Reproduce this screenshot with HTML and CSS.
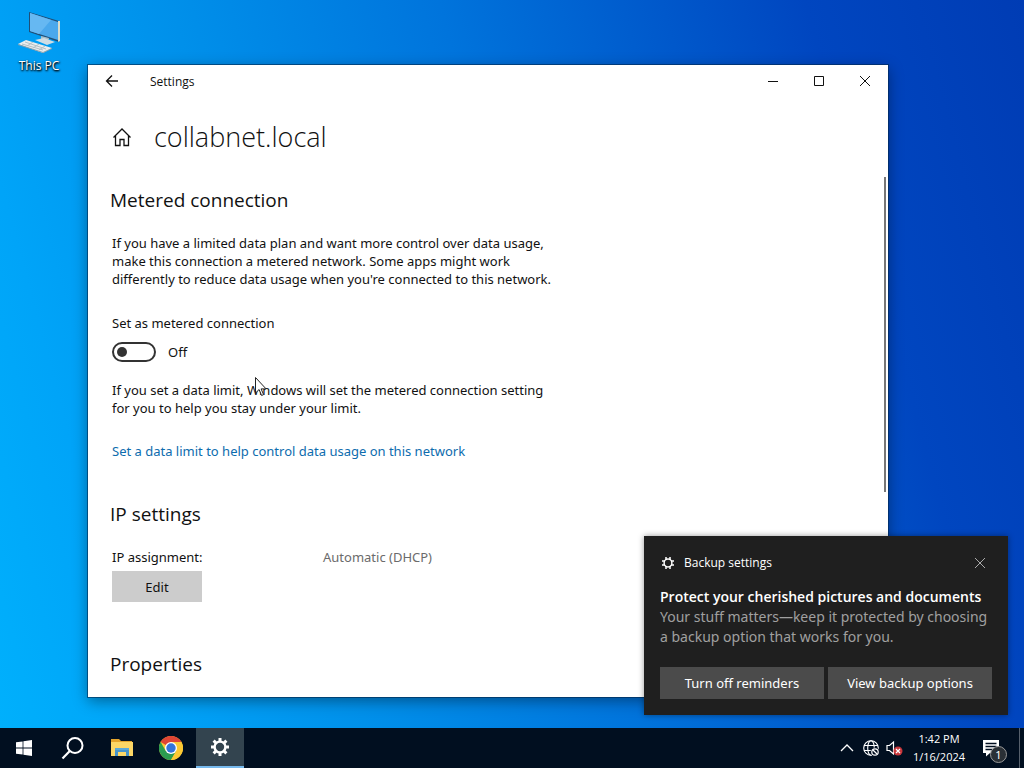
FILE: index.html
```html
<!DOCTYPE html>
<html lang="en">
<head>
    <meta charset="UTF-8">
    <meta name="viewport" content="width=device-width, initial-scale=1.0">
    <title>Settings</title>
    <link rel="stylesheet" href="styles.css">
</head>
<body>
    <div class="desktop">
        <a class="shortcut" href="#">
            <svg width="44" height="44" viewBox="0 0 44 44">
                <polygon points="12,1 42,10 42,31 12,21" fill="#1f4f78"/>
                <polygon points="41,10 43,10 43,30 41,31" fill="#d8dccb"/>
                <polygon points="13,2 41,11 41,29 13,20" fill="#4aa8ec"/>
                <polygon points="13,2 34,9 22,23 13,20" fill="#66b8f2"/>
                <polygon points="24,25 32,27 31,31 24,29" fill="#a9bfca"/>
                <polygon points="18,29 27,27 38,31 30,34" fill="#cfdde4"/>
                <polygon points="1,33 9,29 35,37 26,42" fill="#e9edee"/>
                <polygon points="1,33 26,41 35,37 35,38 26,42 1,34" fill="#8ba0ad"/>
                <path d="M5 33l21 6M8 31l21 7M10 35l6-4M16 37l6-4M22 39l6-4" stroke="#b5c0c5" fill="none"/>
            </svg>
            <span>This PC</span>
        </a>

        <div class="window">
            <div class="titlebar">
                <button class="back" aria-label="Back">
                    <svg width="14" height="14" viewBox="0 0 14 14"><path d="M13 7H1.500M7 1.500L1.500 7L7 12.500"/></svg>
                </button>
                <span class="caption">Settings</span>
                <button class="control" aria-label="Minimize">
                    <svg width="10" height="10" viewBox="0 0 10 10"><path d="M0 5.500h10"/></svg>
                </button>
                <button class="control" aria-label="Maximize">
                    <svg width="10" height="10" viewBox="0 0 10 10"><path d="M.5 .5h9v9h-9z"/></svg>
                </button>
                <button class="control" aria-label="Close">
                    <svg width="10" height="10" viewBox="0 0 10 10"><path d="M0 0l10 10M10 0L0 10"/></svg>
                </button>
            </div>
            <div class="header">
                <a class="home" href="#" aria-label="Home">
                    <svg width="20" height="20" viewBox="0 0 20 20"><path d="M1.500 10.500L10 2l8.500 8.500M3.500 9v9.500h4.500v-6h4v6h4.500V9"/></svg>
                </a>
                <h1>collabnet.local</h1>
            </div>
            <div class="content">
                <h2>Metered connection</h2>
                <p class="text">If you have a limited data plan and want more control over data usage, make this connection a metered network. Some apps might work differently to reduce data usage when you're connected to this network.</p>
                <label class="label" for="metered">Set as metered connection</label>
                <div class="toggle">
                    <input type="checkbox" id="metered" class="switch">
                    <span>Off</span>
                </div>
                <p class="text">If you set a data limit, Windows will set the metered connection setting for you to help you stay under your limit.</p>
                <a class="link" href="#">Set a data limit to help control data usage on this network</a>

                <h2>IP settings</h2>
                <dl class="row">
                    <dt>IP assignment:</dt>
                    <dd>Automatic (DHCP)</dd>
                </dl>
                <button class="edit">Edit</button>

                <h2>Properties</h2>
                <div class="scrollbar"></div>
            </div>
        </div>

        <div class="toast">
            <div class="toast-head">
                <svg width="16" height="16" viewBox="0 0 16 16">
                    <circle cx="8" cy="8" r="3.900" fill="none" stroke="#fff" stroke-width="1.500"/>
                    <path d="M6 2v3M10 2v3M6 11v3M10 11v3M2 6h3M2 10h3M11 6h3M11 10h3" stroke="#fff" stroke-width="1.500"/>
                </svg>
                <span>Backup settings</span>
                <button class="dismiss" aria-label="Dismiss">
                    <svg width="10" height="10" viewBox="0 0 10 10"><path d="M0 0l10 10M10 0L0 10"/></svg>
                </button>
            </div>
            <h3>Protect your cherished pictures and documents</h3>
            <p>Your stuff matters—keep it protected by choosing a backup option that works for you.</p>
            <div class="toast-buttons">
                <button>Turn off reminders</button>
                <button>View backup options</button>
            </div>
        </div>

        <svg class="cursor" width="13" height="20" viewBox="0 0 13 20">
            <path d="M.5 .5v15.500l3.600-3.500 2.500 6 2-.9-2.500-5.700h5z" fill="#fff" stroke="#222"/>
        </svg>
    </div>

    <div class="taskbar">
        <button class="task" aria-label="Start">
            <svg width="16" height="16" viewBox="0 0 16 16"><path d="M0 2.300L6.600 1.400v6.200H0zM7.400 1.300L16 0v7.600H7.400zM0 8.400h6.600v6.200L0 13.700zM7.400 8.400H16V16l-8.600-1.300z" fill="#fff"/></svg>
        </button>
        <button class="task" aria-label="Search">
            <svg width="24" height="24" viewBox="0 0 24 24"><circle cx="14" cy="9.500" r="7.500" fill="none" stroke="#fff" stroke-width="2"/><path d="M8.800 15L1.500 22.500" stroke="#fff" stroke-width="2.200"/></svg>
        </button>
        <button class="task" aria-label="File Explorer">
            <svg width="22" height="18" viewBox="0 0 22 18">
                <path d="M0 0h8l2 2h11v4H0z" fill="#e5a52c"/>
                <path d="M0 3h22v14H0z" fill="#fcd766"/>
                <path d="M4 9h14v8h-3v-4H7v4H4z" fill="#4794c9"/>
                <path d="M4 9h14v2H4z" fill="#5ba9d8"/>
            </svg>
        </button>
        <button class="task" aria-label="Chrome">
            <svg width="24" height="24" viewBox="0 0 24 24">
                <circle cx="12" cy="12" r="12" fill="#fcc934"/>
                <path d="M12 12L1.600 6A12 12 0 0 1 22.400 6z" fill="#df4535"/>
                <path d="M1.600 6A12 12 0 0 0 12 24L17.200 15L12 12L6.800 15z" fill="#2c9d50"/>
                <path d="M12 6h10.400A12 12 0 0 1 12 24l5.200-9z" fill="#fcc934"/>
                <circle cx="12" cy="12" r="6" fill="#fff"/>
                <circle cx="12" cy="12" r="4.700" fill="#3475dc"/>
            </svg>
        </button>
        <button class="task active" aria-label="Settings">
            <svg width="20" height="20" viewBox="0 0 20 20">
                <circle cx="10" cy="10" r="5.400" fill="none" stroke="#fff" stroke-width="2.400"/>
                <path d="M10 1v3.500M10 15.500V19M1 10h3.500M15.500 10H19M3.600 3.600L6 6M14 14l2.400 2.400M3.600 16.400L6 14M14 6l2.400-2.400" stroke="#fff" stroke-width="3"/>
            </svg>
        </button>
        <div class="tray">
            <button aria-label="Show hidden icons">
                <svg width="24" height="18" viewBox="0 0 24 18"><path d="M6 12l6-6 6 6" fill="none" stroke="#fff" stroke-width="1.300"/></svg>
            </button>
            <button aria-label="Network">
                <svg width="24" height="18" viewBox="0 0 24 18">
                    <g fill="none" stroke="#fff" stroke-width="1.100">
                        <circle cx="12" cy="9" r="7.300"/>
                        <ellipse cx="12" cy="9" rx="3.300" ry="7.300"/>
                        <path d="M5 6.500h14M5 11.500h14"/>
                    </g>
                    <circle cx="16" cy="13" r="4.500" fill="#010d1f"/>
                    <circle cx="16" cy="13" r="3.200" fill="none" stroke="#fff" stroke-width="1.200"/>
                    <path d="M14 11l4 4" stroke="#fff" stroke-width="1.200"/>
                </svg>
            </button>
            <button aria-label="Volume muted">
                <svg width="24" height="18" viewBox="0 0 24 18">
                    <path d="M4 6.500h2.500L10.500 3v12l-4-3.500H4z" fill="none" stroke="#fff" stroke-width="1.200"/>
                    <circle cx="15" cy="12" r="4.500" fill="#c9373c"/>
                    <path d="M13 10l4 4M17 10l-4 4" stroke="#fff" stroke-width="1.200"/>
                </svg>
            </button>
            <button class="clock"><span>1:42 PM</span><span>1/16/2024</span></button>
            <button class="notifications" aria-label="Notifications">
                <svg width="18" height="18" viewBox="0 0 18 18">
                    <path d="M1 1h16v13h-9l-4 3.500V14H1z" fill="#fff"/>
                    <path d="M3.500 4.500h11M3.500 7.500h11M3.500 10.500h7" stroke="#020f20" stroke-width="1.300"/>
                </svg>
                <span class="badge">1</span>
            </button>
        </div>
    </div>
</body>
</html>
```
FILE: styles.css
```css
* {
    box-sizing: border-box;
}
body {
    margin: 0;
    height: 100vh;
    display: flex;
    flex-direction: column;
    overflow: hidden;
    font-family: "Noto Sans", "Open Sans", sans-serif;
    font-size: 13px;
    line-height: 18px;
    color: #111;
}
h1, h2, h3, p, dl, dd {
    margin: 0;
}
button {
    font: inherit;
    color: inherit;
    border: none;
    padding: 0;
    background: none;
}
a {
    text-decoration: none;
}
svg {
    display: block;
}
.desktop {
    position: relative;
    flex: 1;
    background: linear-gradient(75deg, #00b0fc 0%, #00a4f8 12%, #0090ea 30%, #0074dc 52%, #0046c0 82%, #003cb4 100%);
}
.shortcut {
    display: flex;
    flex-direction: column;
    align-items: center;
    width: 78px;
    padding-top: 11px;
    color: #fff;
    font-family: "Open Sans", sans-serif;
    font-size: 12px;
    line-height: 22px;
    text-shadow: 0 1px 2px #000, 1px 1px 2px #000;
}

/* settings window */
.window {
    position: absolute;
    top: 65px;
    right: 136px;
    bottom: 31px;
    left: 88px;
    display: flex;
    flex-direction: column;
    background: #fff;
    box-shadow: 0 0 0 1px rgba(0, 40, 80, 0.6), 0 4px 14px rgba(0, 0, 0, 0.4);
}
.titlebar {
    display: flex;
    height: 32px;
    font-family: "Open Sans", sans-serif;
    font-size: 12px;
}
.titlebar svg, .home svg {
    fill: none;
    stroke: #111;
    stroke-width: 1;
}
.home svg, .back svg {
    stroke-width: 1.3;
}
.back {
    width: 48px;
    display: flex;
    justify-content: center;
    align-items: center;
}
.caption {
    flex: 1;
    padding-left: 14px;
    line-height: 34px;
}
.control {
    width: 46px;
    display: flex;
    justify-content: center;
    align-items: center;
}
.header {
    display: flex;
    align-items: center;
    gap: 22px;
    height: 80px;
    padding-left: 24px;
}
h1 {
    font-family: "Open Sans", sans-serif;
    font-size: 27px;
    font-weight: 300;
    line-height: 36px;
}
.content {
    position: relative;
    flex: 1;
    overflow: hidden;
    padding: 9px 24px 0;
}
h2 {
    margin: 0 0 20px -2px;
    font-family: "Open Sans", sans-serif;
    font-size: 19px;
    font-weight: 400;
    line-height: 28px;
}
.text {
    max-width: 450px;
}
.label {
    display: block;
    margin-top: 26px;
}
.toggle {
    display: flex;
    align-items: center;
    gap: 12px;
    margin: 10px 0 19px;
    height: 20px;
}
.switch {
    appearance: none;
    margin: 0;
    width: 44px;
    height: 20px;
    padding: 3px;
    border: 2px solid #333;
    border-radius: 10px;
}
.switch::before {
    content: '';
    display: block;
    width: 10px;
    height: 10px;
    border-radius: 50%;
    background: #333;
}
.link {
    display: block;
    margin: 25px 0 40px;
    color: #0d6cae;
}
.row {
    display: flex;
}
.row dt {
    width: 211px;
}
.row dd {
    color: #6b6b6b;
}
.edit {
    display: block;
    width: 90px;
    height: 31px;
    margin: 5px 0 48px;
    background: #ccc;
}
.scrollbar {
    position: absolute;
    top: 0;
    right: 2px;
    width: 2px;
    height: 315px;
    background: #777;
}

/* notification */
.toast {
    position: absolute;
    right: 16px;
    bottom: 13px;
    width: 364px;
    padding: 17px 16px 16px;
    background: #1f1f1f;
    color: #fff;
    font-size: 14px;
    line-height: 20px;
    box-shadow: 0 0 6px rgba(0, 0, 0, 0.4);
}
.toast-head {
    display: flex;
    align-items: center;
    gap: 8px;
    margin-bottom: 14px;
    font-family: "Open Sans", sans-serif;
    font-size: 12px;
}
.dismiss {
    margin-left: auto;
    padding: 5px 7px;
}
.dismiss svg {
    stroke: #aaa;
}
.toast h3 {
    font-family: "Open Sans", sans-serif;
    font-size: 14px;
    font-weight: 600;
}
.toast p {
    color: #a0a0a0;
}
.toast-buttons {
    display: flex;
    gap: 4px;
    margin-top: 20px;
}
.toast-buttons button {
    flex: 1;
    height: 32px;
    background: #4b4b4b;
    font-size: 13px;
}

.cursor {
    position: absolute;
    left: 255px;
    top: 377px;
}

/* taskbar */
.taskbar {
    display: flex;
    gap: 1px;
    height: 40px;
    background: #010f20;
    color: #fff;
}
.task {
    display: flex;
    justify-content: center;
    align-items: center;
    width: 48px;
}
.task.active {
    background: #33444f;
    border-bottom: 2px solid #76b9ed;
}
.tray {
    display: flex;
    align-items: center;
    margin-left: auto;
    margin-right: 4px;
    border-right: 1px solid #56606c;
}
.clock {
    display: flex;
    flex-direction: column;
    width: 64px;
    font-family: "Open Sans", sans-serif;
    font-size: 11px;
    text-align: center;
}
.notifications {
    position: relative;
    width: 48px;
    padding: 0 11px;
}
.badge {
    position: absolute;
    left: 19px;
    top: 7px;
    width: 17px;
    height: 17px;
    border: 1px solid #999;
    border-radius: 50%;
    background: #2a3036;
    font-size: 11px;
    line-height: 15px;
}
```
